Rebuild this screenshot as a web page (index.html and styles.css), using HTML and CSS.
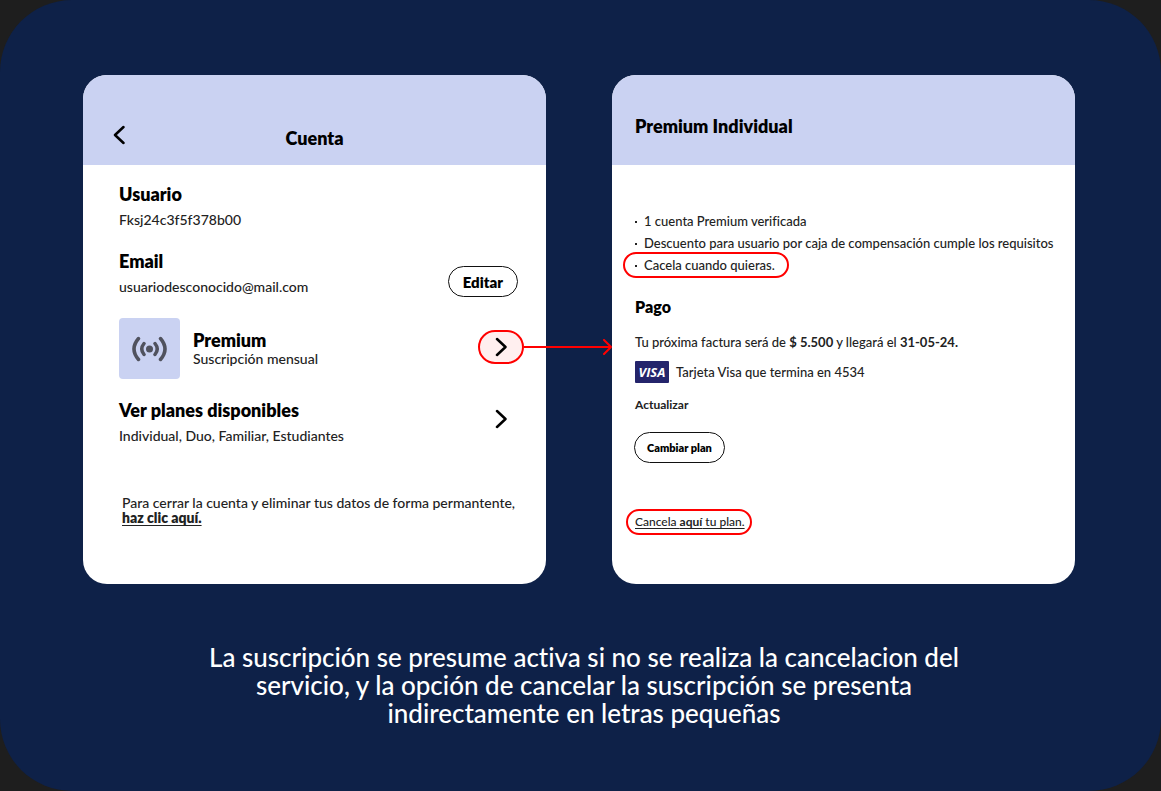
FILE: index.html
```html
<!DOCTYPE html>
<html lang="es">
<head>
<meta charset="utf-8">
<meta name="viewport" content="width=device-width, initial-scale=1">
<title>Cuenta y suscripción</title>
<link rel="stylesheet" href="styles.css">
</head>
<body>
<main class="stage">
  <div class="cards">
    <section class="card">
      <header class="card-header header-account">
        <button class="icon-button" type="button" aria-label="Volver">
          <svg width="12" height="20" viewBox="0 0 12 20"><path class="chevron" d="M10.500 2L2 10L10.500 18"/></svg>
        </button>
        <h1 class="title">Cuenta</h1>
      </header>
      <div class="account-body">
        <div class="row">
          <div class="field">
            <h2 class="title">Usuario</h2>
            <p class="text">Fksj24c3f5f378b00</p>
          </div>
        </div>
        <div class="row row-end">
          <div class="field">
            <h2 class="title">Email</h2>
            <p class="text">usuariodesconocido@mail.com</p>
          </div>
          <button class="pill-button" type="button">Editar</button>
        </div>
        <div class="row row-start">
          <div class="plan">
            <div class="tile">
              <svg width="36" height="28" viewBox="0 0 36 28">
                <circle cx="17.500" cy="14" r="3.500"/>
                <path class="wave" d="M12 8.500Q7.500 14 12 19.500M23 8.500Q27.500 14 23 19.500M6.500 3.500Q-2.500 14 6.500 24.500M28.500 3.500Q37.500 14 28.500 24.500"/>
              </svg>
            </div>
            <div>
              <h2 class="title">Premium</h2>
              <p class="text text-tight">Suscripción mensual</p>
            </div>
          </div>
          <div class="flow-source">
            <button class="chevron-button marked" type="button" aria-label="Ver Premium">
              <svg width="12" height="20" viewBox="0 0 12 20"><path class="chevron" d="M2 2L10.500 10L2 18"/></svg>
            </button>
            <svg class="flow-arrow" width="88" height="16" viewBox="0 0 88 16"><path d="M0 8H87M80 1L87 8L80 15"/></svg>
          </div>
        </div>
        <div class="row row-start">
          <div class="field">
            <h2 class="title">Ver planes disponibles</h2>
            <p class="text">Individual, Duo, Familiar, Estudiantes</p>
          </div>
          <button class="chevron-button" type="button" aria-label="Ver planes disponibles">
            <svg width="12" height="20" viewBox="0 0 12 20"><path class="chevron" d="M2 2L10.500 10L2 18"/></svg>
          </button>
        </div>
        <p class="text closing">Para cerrar la cuenta y eliminar tus datos de forma permantente, <a class="link link-bold" href="#cerrar">haz clic aquí.</a></p>
      </div>
    </section>

    <section class="card">
      <header class="card-header header-premium">
        <h1 class="title">Premium Individual</h1>
      </header>
      <div class="premium-body">
        <ul class="benefits">
          <li>1 cuenta Premium verificada</li>
          <li>Descuento para usuario por caja de compensación cumple los requisitos</li>
          <li class="marked benefit-marked">Cacela cuando quieras.</li>
        </ul>
        <h2 class="subtitle">Pago</h2>
        <p class="note invoice">Tu próxima factura será de <b>$ 5.500</b> y llegará el <b>31-05-24.</b></p>
        <div class="payment">
          <span class="visa">VISA</span>
          <p class="note">Tarjeta Visa que termina en 4534</p>
        </div>
        <a class="update" href="#actualizar">Actualizar</a>
        <button class="pill-button pill-small" type="button">Cambiar plan</button>
        <div class="marked cancel"><a class="link" href="#cancelar">Cancela <b>aquí</b> tu plan.</a></div>
      </div>
    </section>
  </div>
  <p class="caption">La suscripción se presume activa si no se realiza la cancelacion del<br>servicio, y la opción de cancelar la suscripción se presenta<br>indirectamente en letras pequeñas</p>
</main>
</body>
</html>
```
FILE: styles.css
```css
* { box-sizing: border-box; }

body {
  margin: 0;
  background: #1e1e1e;
  color: #222;
  font-family: Lato, "Open Sans", sans-serif;
  font-variant-ligatures: none;
}

h1, h2, p, ul { margin: 0; padding: 0; }

button {
  font-family: inherit;
  color: #000;
  cursor: pointer;
}

.stage {
  min-height: 100vh;
  padding: 75px 86px 64px 83px;
  border-radius: 72px;
  background: #0e2148;
}

.cards {
  display: grid;
  grid-template-columns: 1fr 1fr;
  gap: 66px;
}

.card {
  border-radius: 24px;
  background: #fff;
}

.card-header {
  min-height: 90px;
  border-radius: 24px 24px 0 0;
  background: #cad2f2;
}

.header-account {
  display: grid;
  grid-template-columns: 12px 1fr 12px;
  align-items: center;
  padding: 36px 30px 0;
  text-align: center;
}

.header-premium {
  display: flex;
  align-items: center;
  padding: 12px 23px 0;
}

.title {
  color: #000;
  font-size: 18px;
  line-height: 20px;
  font-weight: 800;
}

.text {
  font-size: 14px;
  line-height: 20px;
  font-weight: 500;
}

.text-tight { line-height: 18px; }

.account-body {
  display: flex;
  flex-direction: column;
  gap: 21px;
  padding: 19px 28px 59px 36px;
}

.row {
  display: flex;
  justify-content: space-between;
  align-items: center;
}

.row-end { align-items: flex-end; }
.row-start { align-items: flex-start; }

.field {
  display: flex;
  flex-direction: column;
  gap: 6px;
}

.plan {
  display: flex;
  align-items: center;
  gap: 13px;
}

.tile {
  display: grid;
  place-items: center;
  width: 61px;
  height: 61px;
  border-radius: 4px;
  background: #cad2f2;
  fill: #50525e;
}

.wave {
  fill: none;
  stroke: #50525e;
  stroke-width: 3.5;
  stroke-linecap: round;
}

.chevron {
  fill: none;
  stroke: #000;
  stroke-width: 2.5;
  stroke-linecap: round;
  stroke-linejoin: round;
}

.icon-button,
.chevron-button {
  display: grid;
  place-items: center;
  padding: 0;
  border: 0;
  background: none;
}

.icon-button { padding-bottom: 6px; }

.chevron-button {
  width: 46px;
  height: 38px;
  margin-right: -6px;
}

.marked {
  border: 2px solid #f00;
  border-radius: 17px;
}

.chevron-button.marked {
  height: 34px;
  background: #ffefef;
}

.flow-source {
  position: relative;
  margin-top: 12px;
}

.flow-arrow {
  position: absolute;
  top: 9px;
  left: calc(100% + 6px);
  fill: none;
  stroke: #f00;
  stroke-width: 2;
  stroke-linecap: round;
}

.pill-button {
  height: 31px;
  padding: 0 14px;
  border: 1px solid #111;
  border-radius: 16px;
  background: #fff;
  font-size: 15px;
  font-weight: 800;
}

.closing {
  margin-top: 28px;
  padding-left: 3px;
  line-height: 15px;
}

.link {
  color: inherit;
  text-decoration: underline;
  text-decoration-thickness: 1px;
  text-underline-offset: 2px;
}

.link-bold { font-weight: 800; }

.premium-body {
  display: flex;
  flex-direction: column;
  align-items: flex-start;
  padding: 45px 14px 49px 23px;
}

.benefits {
  list-style: none;
  font-size: 13px;
  line-height: 22px;
  font-weight: 500;
}

.benefits li::before {
  content: "";
  display: inline-block;
  width: 2px;
  height: 2px;
  margin: 0 7px 2px 0;
  vertical-align: middle;
  background: #222;
}

.benefit-marked {
  width: fit-content;
  margin: -2px -12px;
  padding: 0 12px 0 10px;
}

.subtitle {
  margin-top: 21px;
  color: #000;
  font-size: 16px;
  line-height: 20px;
  font-weight: 800;
}

.note {
  font-size: 13px;
  line-height: 20px;
  font-weight: 500;
}

.invoice { margin-top: 15px; }

.payment {
  display: flex;
  align-items: center;
  gap: 7px;
  margin-top: 9px;
}

.visa {
  width: 34px;
  border-radius: 1px;
  background: #24246b;
  color: #fff;
  font-family: "Open Sans", sans-serif;
  font-size: 13px;
  font-style: italic;
  font-weight: 700;
  line-height: 22px;
  text-align: center;
}

.update {
  margin-top: 12px;
  color: inherit;
  font-size: 12px;
  line-height: 20px;
  font-weight: 700;
  text-decoration: none;
}

.pill-small {
  margin-top: 17px;
  margin-left: -1px;
  padding: 0 12px;
  font-size: 11px;
}

.cancel {
  margin-top: 46px;
  margin-left: -9px;
  padding: 0 5px 0 7px;
  font-size: 12px;
  line-height: 22px;
  font-weight: 500;
}

.caption {
  margin-top: 59px;
  padding-left: 10px;
  color: #fff;
  font-size: 26px;
  line-height: 28px;
  font-weight: 500;
  text-align: center;
}
```
